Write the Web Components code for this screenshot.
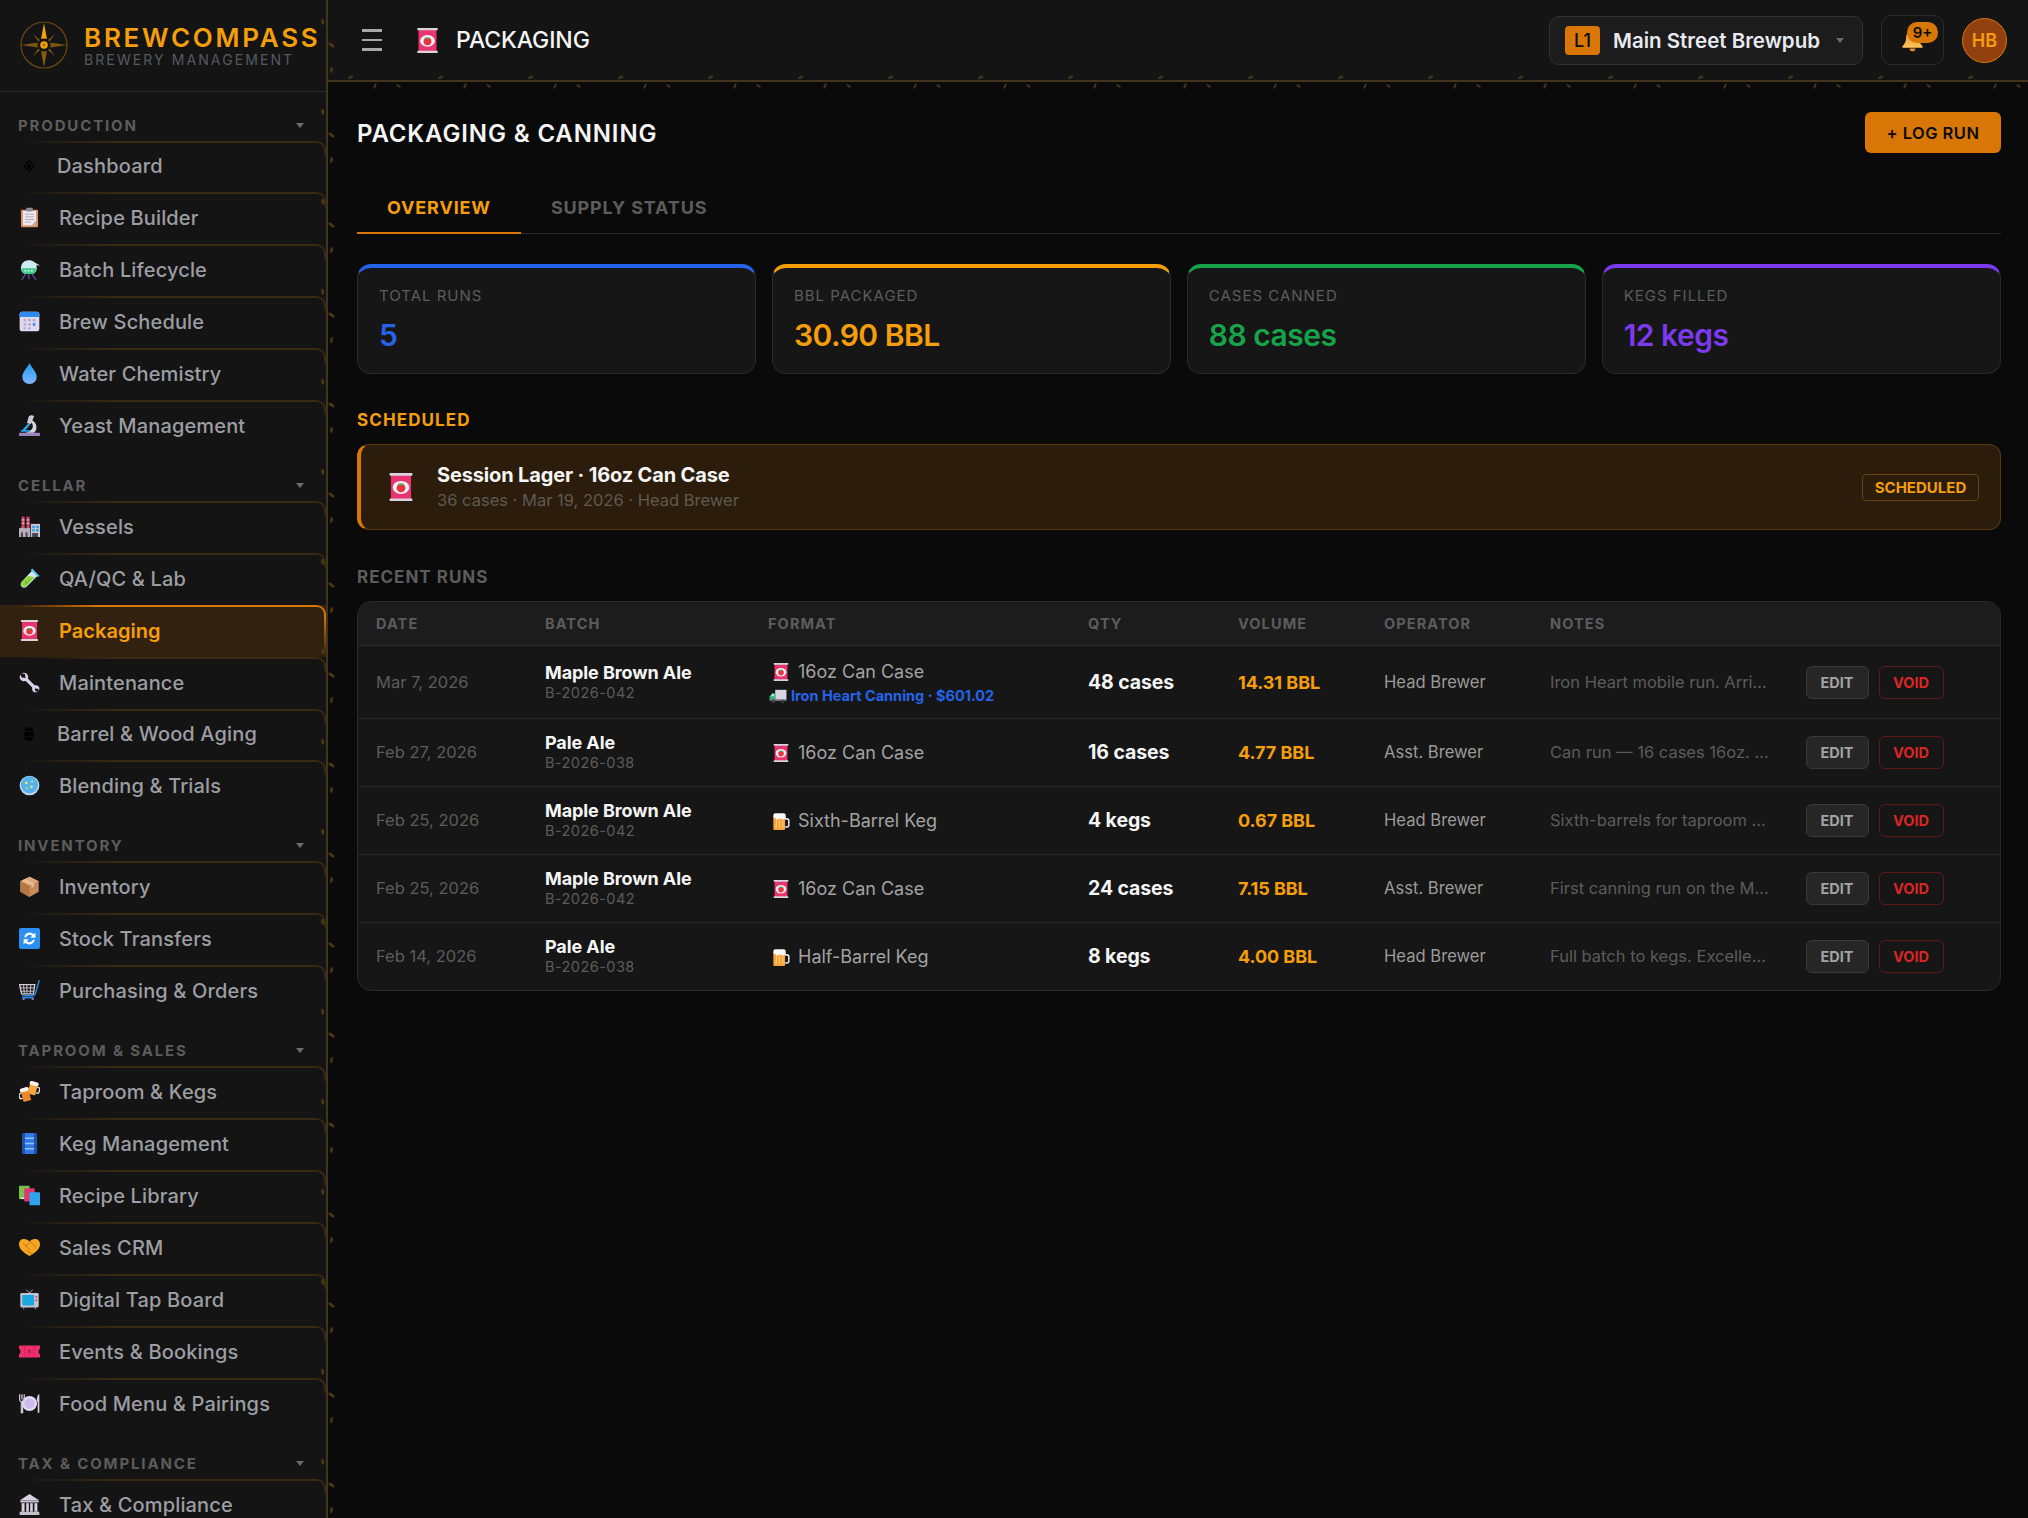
<!DOCTYPE html>
<html lang="en">
<head>
<meta charset="utf-8">
<title>BrewCompass - Packaging</title>
<style>
    html, body { margin: 0; height: 100%; background: #0a0a0a; overflow: hidden; }
    body { font-family: Inter, "Liberation Sans", sans-serif; color: #f5f5f5; }
</style>
</head>
<body>
<brew-app></brew-app>

<script>
// flat emoji style icons, 32x32 viewBox
const ICONS = {
    diamond: '<path d="M16 4 28 16 16 28 4 16Z" fill="none" stroke="#000" stroke-width="2.5"/><path d="M16 10 22 16 16 22 10 16Z" fill="#000"/>',
    clipboard: '<rect x="3" y="4" width="26" height="27" rx="1.5" fill="#d98f62"/><rect x="6" y="6" width="20" height="22" fill="#efe9f4"/><path d="M26 21v7h-7z" fill="#c9a58e"/><rect x="11" y="1" width="10" height="6" rx="1.5" fill="#8d8a96"/><path d="M9 11h14M9 15h14M9 19h14M9 23h9" stroke="#a9a3b5" stroke-width="1.4"/>',
    alembic: '<path d="M15 2C8 2 3 7 3 14c0 4 2 7 6 9h12c4-2 6-5 6-9 0-1.500-.2-3-.8-4.300L32 10 23 4.500C21 2.800 18 2 15 2z" fill="#cfeaf5"/><path d="M3.500 14h23c-.5 4-2.500 7-5.500 9H9c-3-2-5-5-5.500-9z" fill="#3fc98a"/><path d="M8 18h14" stroke="#e6fff2" stroke-width="1.800" stroke-dasharray="3 2"/><path d="M10 23 4 32M20 23l6 9M15 23v8" stroke="#6a4bb0" stroke-width="1.800"/>',
    calendar: '<rect x="1" y="1" width="30" height="30" rx="4" fill="#e3daf2"/><path d="M1 9V5a4 4 0 0 1 4-4h22a4 4 0 0 1 4 4v4z" fill="#2f8bf0"/><g fill="#b4abc8"><rect x="7" y="12" width="4" height="4"/><rect x="14" y="12" width="4" height="4"/><rect x="21" y="12" width="4" height="4"/><rect x="7" y="18.500" width="4" height="4"/><rect x="14" y="18.500" width="4" height="4"/><rect x="7" y="25" width="4" height="3"/><rect x="14" y="25" width="4" height="3"/></g><rect x="21" y="18.500" width="4" height="4" fill="#2f8bf0"/>',
    droplet: '<defs><linearGradient id="dr" x1="0" y1="0" x2="0" y2="1"><stop offset="0" stop-color="#1c9cf0"/><stop offset="1" stop-color="#7fb6ff"/></linearGradient></defs><path d="M16 0C12 8 5 14 5 21a11 11 0 0 0 22 0C27 14 20 8 16 0z" fill="url(#dr)"/>',
    microscope: '<rect x="0" y="27" width="32" height="5" rx="1" fill="#9b83bd"/><path d="M19 8c6 2 9 8 7 15-1 2-2 4-4 4H10c6-2 11-5 11-10 0-3-1-5-4-7z" fill="#d6d2de"/><path d="M15 2c2-2 6-2 8 0l-5 12-6-2z" fill="#cfcbd6"/><path d="M5 23 14 13l3 2L8 25z" fill="#29a9ec"/><rect x="3" y="23" width="14" height="2.500" fill="#29a9ec"/>',
    factory: '<path d="M0 32V19l7-3 3 3 4-3 3 3V32z" fill="#b7adbd"/><rect x="4" y="1" width="4.500" height="17" fill="#d9436a"/><rect x="11.500" y="1" width="4.500" height="17" fill="#d9436a"/><path d="M4 6h4.500M11.500 6H16M4 11h4.500M11.500 11H16" stroke="#e8dbe0" stroke-width="1.500"/><rect x="18" y="12" width="14" height="20" fill="#c9c3d1"/><g fill="#2aa0e8"><rect x="20" y="15" width="4" height="3.500"/><rect x="26" y="15" width="4" height="3.500"/><rect x="20" y="20" width="4" height="3.500"/><rect x="26" y="20" width="4" height="3.500"/></g><g fill="#4b4455"><rect x="3" y="25" width="3" height="7"/><rect x="10" y="25" width="3" height="7"/><rect x="20" y="26" width="9" height="6"/></g>',
    testtube: '<path d="M21 3 29 11 12 28c-2.500 2.500-6 2.500-8 .4-2.200-2.200-2-5.600.4-8z" fill="#cfeaf5"/><path d="M14 12 24 14 12 27c-2.500 2.500-5.600 2.500-7.500.5-2-2-1.800-4.800.5-7z" fill="#8ed43d"/><path d="M19 2 30 13" stroke="#5fc1ee" stroke-width="3"/><circle cx="11" cy="22" r="1.500" fill="#3f9a33"/><circle cx="15" cy="18" r="1" fill="#3f9a33"/>',
    can: '<rect x="4.500" y="2" width="23" height="28" fill="#e9356f"/><rect x="3" y="0" width="26" height="3" rx=".6" fill="#dad3e0"/><rect x="3" y="29" width="26" height="3" rx=".6" fill="#dad3e0"/><ellipse cx="16" cy="16.500" rx="9.500" ry="7.500" fill="#f3edf5"/><circle cx="16" cy="17" r="5" fill="#e8343f"/><path d="M12.800 12h6.400l-1.400 2h-3.600z" fill="#42b84a"/>',
    wrench: '<path d="M9 9 25 25" stroke="#d9d2e6" stroke-width="5"/><circle cx="7.500" cy="7.500" r="6.500" fill="#d9d2e6"/><circle cx="25.500" cy="25.500" r="5.500" fill="#d9d2e6"/><path d="M1 1 9 3 10 9 4 8.500Z" fill="#141414"/><path d="M31 31 25 29.500 24 25 29 25.500Z" fill="#141414"/>',
    barrel: '<path d="M9 1h14c3 4 4 9 4 15s-1 11-4 15H9c-3-4-4-9-4-15S6 5 9 1z" fill="#000"/><path d="M5 10h22M5 22h22" stroke="#1c1c1c" stroke-width="1.500"/>',
    petri: '<circle cx="16" cy="16" r="15" fill="#c4d6ef"/><circle cx="16" cy="15" r="13" fill="#55b2ea"/><circle cx="11" cy="12" r="2" fill="#e6e85c"/><circle cx="20" cy="10" r="1.500" fill="#e6e85c"/><circle cx="19" cy="18" r="2" fill="#e6e85c"/><circle cx="12" cy="20" r="1.200" fill="#e6e85c"/>',
    box: '<path d="M16 1 30 8v16l-14 8-14-8V8z" fill="#c68a5c"/><path d="M16 1 30 8 16 15 2 8z" fill="#e0aa7c"/><path d="M16 15v17L2 24V8z" fill="#b37645"/><path d="M9 4.500 23 11.500v5l-4 2v-5L5 6.500z" fill="#f0c9a3" opacity=".7"/>',
    sync: '<rect x="0" y="0" width="32" height="32" rx="3" fill="#2a8ff0"/><path d="M8 14a8.500 8.500 0 0 1 14.500-4.500L25 7v8h-8l3-3a5.500 5.500 0 0 0-9 2z" fill="#fff"/><path d="M24 18a8.500 8.500 0 0 1-14.500 4.500L7 25v-8h8l-3 3a5.500 5.500 0 0 0 9-2z" fill="#fff"/>',
    cart: '<path d="M1 7h23l-2 14H4z" fill="none" stroke="#d0cdd8" stroke-width="2"/><path d="M1 12h22M2 17h21M7 7l1 14M12 7v14M18 7l-1 14" stroke="#d0cdd8" stroke-width="1.400"/><path d="M31 0 25 21c-.6 2-2 3-4 3H5" fill="none" stroke="#2f8bf0" stroke-width="2"/><circle cx="7" cy="29" r="2" fill="#7c74a8"/><circle cx="21" cy="29" r="2" fill="#7c74a8"/><path d="M5 27h17" stroke="#2f8bf0" stroke-width="2"/>',
    beers: '<g transform="rotate(15 22 12)"><rect x="15" y="5" width="12" height="16" rx="1.500" fill="#f7a63a"/><rect x="14" y="1" width="14" height="6" rx="3" fill="#fbf4ee"/><path d="M27 8h2a2.500 2.500 0 0 1 2.500 2.500v4A2.500 2.500 0 0 1 29 17h-2" fill="none" stroke="#e8e3ee" stroke-width="2"/></g><g transform="rotate(-15 10 20)"><rect x="4" y="14" width="12" height="17" rx="1.500" fill="#f0862a"/><rect x="3" y="10" width="14" height="6" rx="3" fill="#fbf4ee"/><path d="M4 17H2a2 2 0 0 0-2 2v4a2 2 0 0 0 2 2h2" fill="none" stroke="#e8e3ee" stroke-width="2"/></g>',
    keg: '<rect x="5" y="0" width="22" height="32" rx="2" fill="#2f7be6"/><path d="M5 8h22M5 16h22M5 24h22" stroke="#8fc0f8" stroke-width="2"/><rect x="5" y="0" width="4" height="32" fill="#1d4ea8"/><rect x="23" y="0" width="4" height="32" fill="#1d4ea8"/>',
    books: '<rect x="0" y="1" width="16" height="20" rx="1" fill="#79c24a"/><rect x="2" y="19" width="14" height="2.500" fill="#d8e8d0"/><rect x="8" y="5" width="16" height="20" rx="1" fill="#e0356f"/><rect x="16" y="11" width="16" height="20" rx="1" fill="#2fa3ec"/>',
    handshake: '<path d="M16 29C7 24 0 18 0 11c0-5 3-8 8-8 3 0 6 1.500 8 4 2-2.500 5-4 8-4 5 0 8 3 8 8 0 7-7 13-16 18z" fill="#f6a623"/><path d="M6 9 16 19M12 20l6 5M10 14l8-7 8 10M16 23l4 3" stroke="#d07f12" stroke-width="1.500" fill="none"/>',
    tv: '<path d="M11 1 16 6 21 1" fill="none" stroke="#b8b2c4" stroke-width="1.500"/><rect x="2" y="6" width="28" height="22" rx="2" fill="#c9c3d1"/><rect x="5" y="9" width="18" height="16" rx="1" fill="#18a8e0"/><circle cx="26.500" cy="12" r="1.500" fill="#e0356f"/><circle cx="26.500" cy="17" r="1.500" fill="#e0356f"/><path d="M7 28v3M25 28v3" stroke="#8d8798" stroke-width="2"/>',
    ticket: '<path d="M0 7h32v5c-1.500 0-2 1.500-2 4s.5 4 2 4v5H0v-5c1.500 0 2-1.500 2-4s-.5-4-2-4z" fill="#ee2f6b"/><path d="M9 9v14M23 9v14" stroke="#b81f50" stroke-width="1.500" stroke-dasharray="2 2"/><rect x="14" y="13" width="4" height="6" fill="#b81f50"/>',
    plate: '<circle cx="16" cy="16" r="11.500" fill="#e6dcf5"/><circle cx="16" cy="16" r="8" fill="#cdbdea"/><path d="M1 2v8c0 2 1 3 2.500 3v17h2V13C7 13 8 12 8 10V2M4.500 2v8" stroke="#d9d0e6" stroke-width="1.800" fill="none"/><path d="M30 2c-2 2-3 6-3 11h1.500v17H31V2z" fill="#d9d0e6"/>',
    bank: '<path d="M16 0 31 10H1z" fill="#d6d2de"/><rect x="2" y="10" width="28" height="3" fill="#c4c0cc"/><g fill="#d6d2de"><rect x="4" y="14" width="4.500" height="13"/><rect x="11" y="14" width="4" height="13"/><rect x="17" y="14" width="4" height="13"/><rect x="23.500" y="14" width="4.500" height="13"/></g><rect x="1" y="27" width="30" height="5" fill="#c4c0cc"/>',
    bell: '<defs><linearGradient id="bl" x1="0" y1="0" x2="0" y2="1"><stop offset="0" stop-color="#e88a2a"/><stop offset="1" stop-color="#fbc65a"/></linearGradient></defs><path d="M16 2c-6 0-9 5-9 11 0 5-2 8-5 11v2h28v-2c-3-3-5-6-5-11 0-6-3-11-9-11z" fill="url(#bl)"/><path d="M12 27a4 4 0 0 0 8 0z" fill="#f0862a"/>',
    beer: '<g transform="translate(-2 -1) scale(1.1)"><rect x="4" y="7" width="19" height="23" rx="2" fill="#f7a63a"/><path d="M23 12h3a3 3 0 0 1 3 3v7a3 3 0 0 1-3 3h-3" fill="none" stroke="#e8e3ee" stroke-width="2.500"/><path d="M4 9V6a3 3 0 0 1 3-3h14a3 3 0 0 1 3 3v5c0 1.500-2 1.500-2 0 0 3-4 3-4 0-1 2-4 2-5 0-1 3-5 3-6-1-.5 1-3 1-3-2z" fill="#fbf7f2"/><path d="M9 15v11M14 15v11M19 15v11" stroke="#fcd48a" stroke-width="1.500"/></g>',
    truck: '<rect x="11" y="5" width="20" height="18" fill="#d9d5e0"/><path d="M11 11H5l-4 6v6h10z" fill="#35b27a"/><path d="M6 12.500h3v4H3.500z" fill="#bfeaf7"/><rect x="1" y="22" width="30" height="3" fill="#6f6a78"/><circle cx="8" cy="26" r="3" fill="#3a3640"/><circle cx="24" cy="26" r="3" fill="#3a3640"/>'
};

class EmojiIcon extends HTMLElement {
    connectedCallback() {
        const size = this.getAttribute('size') || 21;
        const name = this.getAttribute('name');
        this.attachShadow({ mode: 'open' });
        this.shadowRoot.innerHTML = `
            <style>:host { display: inline-flex; flex: none; width: ${size}px; height: ${size}px; } svg { display: block; width: 100%; height: 100%; }</style>
            <svg viewBox="0 0 32 32">${ICONS[name] || ''}</svg>`;
    }
}

const navItemTemplate = document.createElement('template');
navItemTemplate.innerHTML = `
<style>
    :host { display: flex; align-items: center; position: relative; height: 52px; box-sizing: border-box;
        padding: 0 0 1px 19px; font-size: 20px; font-weight: 500; color: #9c9ea3; letter-spacing: .15px; }
    :host([short]) { height: 51px; padding-left: 22px; }
    :host::before { content: ''; position: absolute; inset: 0; box-sizing: border-box; pointer-events: none;
        border-top: 2px solid #3a2a14; border-right: 2px solid #3a2a14; border-top-right-radius: 9px;
        -webkit-mask-image: linear-gradient(to right, transparent 5%, #000 35%), linear-gradient(to bottom, #000 0, #000 20%, transparent 35%);
        -webkit-mask-composite: source-in; mask-composite: intersect; }
    :host([active]) { background: #33210f; color: #f59e0b; font-weight: 600; letter-spacing: .05px; }
    :host([active])::before { border-color: #d97706;
        -webkit-mask-image: linear-gradient(to right, transparent 5%, #000 30%), linear-gradient(to bottom, #000 0, #000 20%, transparent 100%); }
    .label { margin-left: 19px; white-space: nowrap; }
    :host([short]) .label { margin-left: 21px; }
</style>
<slot name="icon"></slot>
<span class="label"><slot></slot></span>
`;

class NavItem extends HTMLElement {
    constructor() {
        super();
        this.attachShadow({ mode: 'open' });
        this.shadowRoot.appendChild(navItemTemplate.content.cloneNode(true));
    }
}

const navSectionTemplate = document.createElement('template');
navSectionTemplate.innerHTML = `
<style>
    :host { display: block; }
    .head { display: flex; align-items: flex-end; justify-content: space-between; height: 49px; box-sizing: border-box;
        padding: 0 22px 6px 18px; font-size: 15px; font-weight: 700; letter-spacing: 1.85px; color: #5c5c5c; }
    .caret { width: 0; height: 0; margin-bottom: 7px; border: 4px solid transparent; border-top: 5px solid #6b6b6b; border-bottom: 0; }
</style>
<div class="head"><span class="label"></span><span class="caret"></span></div>
<slot></slot>
`;

class NavSection extends HTMLElement {
    constructor() {
        super();
        this.attachShadow({ mode: 'open' });
        this.shadowRoot.appendChild(navSectionTemplate.content.cloneNode(true));
        this.shadowRoot.querySelector('.label').textContent = this.getAttribute('label');
    }
}

const sidebarTemplate = document.createElement('template');
sidebarTemplate.innerHTML = `
<style>
    :host { display: block; flex: none; width: 328px; height: 100%; box-sizing: border-box; overflow: hidden;
        background: #141414; border-right: 2px solid #42351d; }
    .brand { display: flex; align-items: center; gap: 16px; height: 92px; box-sizing: border-box; padding: 0 0 0 20px;
        border-bottom: 1px solid #2a2a2a; }
    .compass { flex: none; width: 48px; height: 48px; margin-bottom: 2px; }
    .name { font-size: 26px; line-height: 30px; font-weight: 600; letter-spacing: 2.75px; color: #f59e0b; white-space: nowrap; }
    .tag { margin-top: -1px; font-size: 14px; line-height: 16px; letter-spacing: 2.1px; color: #565a60; white-space: nowrap; }
</style>
<div class="brand">
    <svg class="compass" viewBox="0 0 48 48">
        <circle cx="24" cy="24" r="23" fill="none" stroke="#6f4a10" stroke-width="1.200"/>
        <path d="M1 24 18 21.500 24 24 18 26.500ZM47 24 30 21.500 24 24 30 26.500Z" fill="#7d5410"/>
        <path d="M24 2 26.800 17 24 24 21.200 17Z" fill="#f59e0b"/>
        <path d="M24 46 26.800 31 24 24 21.200 31Z" fill="#8a5c10"/>
        <path d="M13 13 21 20 24 24 19 21ZM35 13 27 20 24 24 29 21ZM13 35 21 28 24 24 19 27ZM35 35 27 28 24 24 29 27Z" fill="#8a5c10"/>
        <circle cx="24" cy="24" r="6.500" fill="#141414"/>
        <circle cx="24" cy="24" r="3.800" fill="#f59e0b"/>
        <circle cx="24" cy="24" r="1.400" fill="#a86a08"/>
    </svg>
    <div>
        <div class="name">BREWCOMPASS</div>
        <div class="tag">BREWERY MANAGEMENT</div>
    </div>
</div>
<slot></slot>
`;

class BrewSidebar extends HTMLElement {
    constructor() {
        super();
        this.attachShadow({ mode: 'open' });
        this.shadowRoot.appendChild(sidebarTemplate.content.cloneNode(true));
    }
}

const topBarTemplate = document.createElement('template');
topBarTemplate.innerHTML = `
<style>
    :host { display: flex; align-items: center; flex: none; height: 82px; box-sizing: border-box; padding: 0 21px 0 34px;
        background: #141414; border-bottom: 2px solid #42351d; }
    .burger { display: flex; flex-direction: column; gap: 7px; width: 20px; padding: 0; border: 0; background: none; }
    .burger span { display: block; height: 2.400px; background: #a8a8a8; }
    .title { margin-left: 16px; font-size: 23px; font-weight: 500; color: #f5f5f5; letter-spacing: -.1px; }
    .can { margin-left: 33px; }
    .spacer { flex: 1; }
    .location { display: flex; align-items: center; width: 314px; height: 49px; box-sizing: border-box; padding: 0 15px;
        background: #1c1c1c; border: 1px solid #333; border-radius: 10px; }
    .code { display: flex; align-items: center; justify-content: center; width: 35px; height: 29px; border-radius: 4px;
        background: #d97706; color: #0a0a0a; font-size: 18px; font-weight: 500; }
    .place { margin-left: 13px; font-size: 20.500px; font-weight: 600; color: #e8eaf0; white-space: nowrap; }
    .caret { width: 0; height: 0; margin-left: auto; margin-right: 3px; border: 4px solid transparent; border-top: 5px solid #6b6b6b; border-bottom: 0; }
    .bell { position: relative; display: flex; align-items: center; justify-content: center; width: 63px; height: 50px;
        box-sizing: border-box; margin-left: 18px; padding: 0 0 0 0; border: 1px solid #2a2a2a; border-radius: 10px; }
    .badge { position: absolute; top: 6px; left: 25px; min-width: 31px; height: 21px; border-radius: 10px; background: #d97706;
        color: #0a0a0a; font-size: 15px; font-weight: 600; line-height: 21px; text-align: center; }
    .avatar { display: flex; align-items: center; justify-content: center; width: 45px; height: 45px; box-sizing: border-box;
        margin-left: 18px; border-radius: 50%; background: #92400e; border: 1.500px solid #d97706; color: #f59e0b; font-size: 18px; font-weight: 600; }
</style>
<div class="burger"><span></span><span></span><span></span></div>
<emoji-icon class="can" name="can" size="25"></emoji-icon>
<div class="title"><slot></slot></div>
<div class="spacer"></div>
<div class="location">
    <div class="code">L1</div>
    <div class="place">Main Street Brewpub</div>
    <div class="caret"></div>
</div>
<div class="bell"><emoji-icon name="bell" size="23"></emoji-icon><div class="badge">9+</div></div>
<div class="avatar">HB</div>
`;

class TopBar extends HTMLElement {
    constructor() {
        super();
        this.attachShadow({ mode: 'open' });
        this.shadowRoot.appendChild(topBarTemplate.content.cloneNode(true));
    }
}

const pageHeadTemplate = document.createElement('template');
pageHeadTemplate.innerHTML = `
<style>
    :host { display: flex; align-items: center; justify-content: space-between; height: 41px; margin-bottom: 30px; }
    h1 { margin: 2px 0 0; font-size: 24px; font-weight: 600; letter-spacing: .87px; color: #f5f5f5; }
    button { width: 136px; height: 41px; border: 0; border-radius: 6px; background: #d97706; color: #0a0a0a;
        font: 600 16.500px Inter, sans-serif; letter-spacing: .45px; }
</style>
<h1><slot></slot></h1>
<button>+ LOG RUN</button>
`;

class PageHead extends HTMLElement {
    constructor() {
        super();
        this.attachShadow({ mode: 'open' });
        this.shadowRoot.appendChild(pageHeadTemplate.content.cloneNode(true));
    }
}

const tabBarTemplate = document.createElement('template');
tabBarTemplate.innerHTML = `
<style>
    :host { display: flex; height: 51px; box-sizing: border-box; border-bottom: 1px solid #2a2a2a; margin-bottom: 30px; }
    .tab { display: flex; align-items: center; height: 51px; box-sizing: border-box; padding: 0 30px 2px;
        font-size: 18px; font-weight: 700; letter-spacing: .85px; color: #5c5c5c; }
    .tab.on { padding-bottom: 0; color: #f59e0b; border-bottom: 2px solid #d97706; }
</style>
<div class="tab on">OVERVIEW</div>
<div class="tab">SUPPLY STATUS</div>
`;

class TabBar extends HTMLElement {
    constructor() {
        super();
        this.attachShadow({ mode: 'open' });
        this.shadowRoot.appendChild(tabBarTemplate.content.cloneNode(true));
    }
}

const statCardTemplate = document.createElement('template');
statCardTemplate.innerHTML = `
<style>
    :host { display: block; height: 110px; box-sizing: border-box; padding: 18px 21px 0;
        background: #161616; border: 1px solid #2a2a2a; border-top: 4px solid var(--accent); border-radius: 14px; }
    .label { font-size: 15px; line-height: 20px; letter-spacing: 1px; color: #5c5c5c; }
    .value { margin-top: 10px; font-size: 30px; line-height: 38px; font-weight: 600; letter-spacing: -.5px; color: var(--accent); }
</style>
<div class="label"></div>
<div class="value"></div>
`;

class StatCard extends HTMLElement {
    constructor() {
        super();
        this.attachShadow({ mode: 'open' });
        this.shadowRoot.appendChild(statCardTemplate.content.cloneNode(true));
        this.shadowRoot.querySelector('.label').textContent = this.getAttribute('label');
        this.shadowRoot.querySelector('.value').textContent = this.getAttribute('value');
        this.style.setProperty('--accent', this.getAttribute('accent'));
    }
}

const scheduledTemplate = document.createElement('template');
scheduledTemplate.innerHTML = `
<style>
    :host { display: flex; align-items: center; height: 86px; box-sizing: border-box; padding: 0 21px 0 26px;
        background: #2c1c0b; border: 1px solid #5c3a10; border-left: 4px solid #d97706; border-radius: 12px; }
    .text { flex: 1; margin: 2px 0 0 22px; }
    .title { font-size: 20px; line-height: 25px; font-weight: 700; letter-spacing: -.15px; color: #f5f5f5; }
    .sub { font-size: 16.500px; line-height: 25px; color: #5f5a52; }
    .badge { display: flex; align-items: center; justify-content: center; width: 117px; height: 27px; box-sizing: border-box;
        border: 1px solid #6b4310; border-radius: 4px; font-size: 15px; font-weight: 700; color: #f59e0b; }
</style>
<emoji-icon name="can" size="28"></emoji-icon>
<div class="text">
    <div class="title">Session Lager · 16oz Can Case</div>
    <div class="sub">36 cases · Mar 19, 2026 · Head Brewer</div>
</div>
<div class="badge">SCHEDULED</div>
`;

class ScheduledCard extends HTMLElement {
    constructor() {
        super();
        this.attachShadow({ mode: 'open' });
        this.shadowRoot.appendChild(scheduledTemplate.content.cloneNode(true));
    }
}

// column starts taken from the table: date, batch, format, qty, volume, operator, notes, actions
const COLUMNS = '169px 223px 320px 150px 146px 166px 255.500px 1fr';

const runsTableTemplate = document.createElement('template');
runsTableTemplate.innerHTML = `
<style>
    :host { display: block; box-sizing: border-box; background: #161616; border: 1px solid #2a2a2a; border-radius: 14px; overflow: hidden; }
    .head { display: grid; grid-template-columns: ${COLUMNS}; align-items: center; height: 44px; box-sizing: border-box; padding-left: 18px;
        background: #1c1c1c; border-bottom: 1px solid #2a2a2a; font-size: 14.500px; font-weight: 700; letter-spacing: 1.1px; color: #5c5c5c; }
</style>
<div class="head"><span>DATE</span><span>BATCH</span><span>FORMAT</span><span>QTY</span><span>VOLUME</span><span>OPERATOR</span><span>NOTES</span><span></span></div>
<slot></slot>
`;

class RunsTable extends HTMLElement {
    constructor() {
        super();
        this.attachShadow({ mode: 'open' });
        this.shadowRoot.appendChild(runsTableTemplate.content.cloneNode(true));
    }
}

const runRowTemplate = document.createElement('template');
runRowTemplate.innerHTML = `
<style>
    :host { display: grid; grid-template-columns: ${COLUMNS}; align-items: center; box-sizing: border-box; padding: 14px 0 13px 18px;
        border-bottom: 1px solid #2a2a2a; }
    :host([vendor]) { padding-bottom: 12px; }
    :host(:last-child) { border-bottom: 0; }
    .date, .qty, .volume, .operator, .notes, .actions { margin-bottom: 2px; }
    .date { font-size: 16.500px; color: #5c5c5c; }
    .batch { font-size: 18px; line-height: 20px; font-weight: 700; letter-spacing: -.08px; color: #f5f5f5; }
    .code { font-size: 14.500px; line-height: 20px; letter-spacing: .45px; color: #5c5c5c; }
    .format { display: flex; align-items: center; font-size: 18px; line-height: 20px; color: #a3a3a3; }
    .format emoji-icon { margin: 0 8px 0 4px; }
    .has-vendor { padding-top: 2px; }
    .vendor { display: none; align-items: center; margin-top: 4px; font-size: 14.500px; line-height: 20px; font-weight: 700; color: #2563eb; }
    .vendor emoji-icon { margin-right: 4px; margin-left: 1px; }
    .qty { font-size: 19.500px; font-weight: 700; letter-spacing: -.1px; color: #f5f5f5; }
    .volume { font-size: 18px; font-weight: 700; letter-spacing: -.05px; color: #f59e0b; }
    .operator { font-size: 16.600px; color: #9a9a9a; }
    .notes { font-size: 16.500px; color: #5c5c5c; white-space: nowrap; }
    .actions { display: flex; gap: 10px; }
    button { height: 33px; box-sizing: border-box; border-radius: 6px; padding: 0; font: 700 14.500px Inter, sans-serif; }
    .edit { width: 63px; background: #262626; border: 1px solid #3a3a3a; color: #a3a3a3; }
    .void { width: 65px; background: transparent; border: 1px solid #5c1a1a; color: #dc2626; }
</style>
<div class="date"></div>
<div><div class="batch"></div><div class="code"></div></div>
<div class="fmt-cell">
    <div class="format"><emoji-icon size="18"></emoji-icon><span class="fmt"></span></div>
    <div class="vendor"><emoji-icon name="truck" size="18"></emoji-icon><span class="vtext"></span></div>
</div>
<div class="qty"></div>
<div class="volume"></div>
<div class="operator"></div>
<div class="notes"></div>
<div class="actions"><button class="edit">EDIT</button><button class="void">VOID</button></div>
`;

class RunRow extends HTMLElement {
    constructor() {
        super();
        this.attachShadow({ mode: 'open' });
        const row = runRowTemplate.content.cloneNode(true);
        for (const key of ['date', 'batch', 'code', 'qty', 'volume', 'operator', 'notes']) {
            row.querySelector('.' + key).textContent = this.getAttribute(key);
        }
        row.querySelector('.fmt').textContent = this.getAttribute('format');
        // the icon reads its name when it connects, so set it before appending
        row.querySelector('.format emoji-icon').setAttribute('name', this.getAttribute('icon'));
        if (this.hasAttribute('vendor')) {
            row.querySelector('.fmt-cell').classList.add('has-vendor');
            row.querySelector('.vendor').style.display = 'flex';
            row.querySelector('.vtext').textContent = this.getAttribute('vendor');
        }
        this.shadowRoot.appendChild(row);
    }
}

// small hop leaves that repeat along the two dim amber borders
class HopVine extends HTMLElement {
    connectedCallback() {
        this.attachShadow({ mode: 'open' });
        this.shadowRoot.innerHTML = `
        <style>
            :host { position: absolute; inset: 0; pointer-events: none; display: block; }
            svg { position: absolute; left: 0; top: 0; }
        </style>
        <svg width="2028" height="1518">
            <defs>
                <pattern id="side" patternUnits="userSpaceOnUse" x="318" y="0" width="20" height="90">
                    <g fill="#4a3617">
                        <ellipse cx="4.700" cy="21.700" rx="1.500" ry="3" transform="rotate(-8 4.700 21.700)"/>
                        <ellipse cx="13.500" cy="45" rx="1.400" ry="3.500" transform="rotate(-55 13.500 45)"/>
                        <ellipse cx="13.500" cy="70" rx="1.400" ry="3" transform="rotate(12 13.500 70)"/>
                    </g>
                </pattern>
                <pattern id="top" patternUnits="userSpaceOnUse" x="340" y="72" width="90" height="20">
                    <g fill="#42321a">
                        <ellipse cx="10.700" cy="5.300" rx="2.800" ry="1.400" transform="rotate(-20 10.700 5.300)"/>
                        <ellipse cx="35" cy="14" rx="1.100" ry="3" transform="rotate(22 35 14)"/>
                        <ellipse cx="58.500" cy="14" rx="2.400" ry="1.200" transform="rotate(28 58.500 14)"/>
                    </g>
                </pattern>
            </defs>
            <rect x="318" y="0" width="20" height="1518" fill="url(#side)"/>
            <rect x="340" y="72" width="1688" height="20" fill="url(#top)"/>
        </svg>`;
    }
}

const brewAppTemplate = document.createElement('template');
brewAppTemplate.innerHTML = `
<style>
    :host { display: flex; position: relative; height: 1518px; overflow: hidden; background: #0a0a0a; }
    .main { flex: 1; display: flex; flex-direction: column; min-width: 0; }
    .page { padding: 30px 27px 0 29px; }
    .stats { display: grid; grid-template-columns: repeat(4, 1fr); gap: 15.500px; margin-bottom: 35px; }
    h2 { margin: 0; font-size: 17px; line-height: 22px; font-weight: 700; }
    .amber { color: #f59e0b; margin-bottom: 13px; letter-spacing: 1.1px; }
    .grey { color: #5c5c5c; margin: 36px 0 13px; letter-spacing: 1px; }
</style>
<brew-sidebar>
    <nav-section label="PRODUCTION">
        <nav-item short><emoji-icon slot="icon" name="diamond" size="14"></emoji-icon>Dashboard</nav-item>
        <nav-item><emoji-icon slot="icon" name="clipboard"></emoji-icon>Recipe Builder</nav-item>
        <nav-item><emoji-icon slot="icon" name="alembic"></emoji-icon>Batch Lifecycle</nav-item>
        <nav-item><emoji-icon slot="icon" name="calendar"></emoji-icon>Brew Schedule</nav-item>
        <nav-item><emoji-icon slot="icon" name="droplet"></emoji-icon>Water Chemistry</nav-item>
        <nav-item><emoji-icon slot="icon" name="microscope"></emoji-icon>Yeast Management</nav-item>
    </nav-section>
    <nav-section label="CELLAR">
        <nav-item><emoji-icon slot="icon" name="factory"></emoji-icon>Vessels</nav-item>
        <nav-item><emoji-icon slot="icon" name="testtube"></emoji-icon>QA/QC &amp; Lab</nav-item>
        <nav-item active><emoji-icon slot="icon" name="can"></emoji-icon>Packaging</nav-item>
        <nav-item><emoji-icon slot="icon" name="wrench"></emoji-icon>Maintenance</nav-item>
        <nav-item short><emoji-icon slot="icon" name="barrel" size="14"></emoji-icon>Barrel &amp; Wood Aging</nav-item>
        <nav-item><emoji-icon slot="icon" name="petri"></emoji-icon>Blending &amp; Trials</nav-item>
    </nav-section>
    <nav-section label="INVENTORY">
        <nav-item><emoji-icon slot="icon" name="box"></emoji-icon>Inventory</nav-item>
        <nav-item><emoji-icon slot="icon" name="sync"></emoji-icon>Stock Transfers</nav-item>
        <nav-item><emoji-icon slot="icon" name="cart"></emoji-icon>Purchasing &amp; Orders</nav-item>
    </nav-section>
    <nav-section label="TAPROOM &amp; SALES">
        <nav-item><emoji-icon slot="icon" name="beers"></emoji-icon>Taproom &amp; Kegs</nav-item>
        <nav-item><emoji-icon slot="icon" name="keg"></emoji-icon>Keg Management</nav-item>
        <nav-item><emoji-icon slot="icon" name="books"></emoji-icon>Recipe Library</nav-item>
        <nav-item><emoji-icon slot="icon" name="handshake"></emoji-icon>Sales CRM</nav-item>
        <nav-item><emoji-icon slot="icon" name="tv"></emoji-icon>Digital Tap Board</nav-item>
        <nav-item><emoji-icon slot="icon" name="ticket"></emoji-icon>Events &amp; Bookings</nav-item>
        <nav-item><emoji-icon slot="icon" name="plate"></emoji-icon>Food Menu &amp; Pairings</nav-item>
    </nav-section>
    <nav-section label="TAX &amp; COMPLIANCE">
        <nav-item><emoji-icon slot="icon" name="bank"></emoji-icon>Tax &amp; Compliance</nav-item>
    </nav-section>
</brew-sidebar>
<div class="main">
    <top-bar>PACKAGING</top-bar>
    <div class="page">
        <page-head>PACKAGING &amp; CANNING</page-head>
        <tab-bar></tab-bar>
        <div class="stats">
            <stat-card label="TOTAL RUNS" value="5" accent="#2563eb"></stat-card>
            <stat-card label="BBL PACKAGED" value="30.90 BBL" accent="#f59e0b"></stat-card>
            <stat-card label="CASES CANNED" value="88 cases" accent="#16a34a"></stat-card>
            <stat-card label="KEGS FILLED" value="12 kegs" accent="#7c3aed"></stat-card>
        </div>
        <h2 class="amber">SCHEDULED</h2>
        <scheduled-card></scheduled-card>
        <h2 class="grey">RECENT RUNS</h2>
        <runs-table>
            <run-row date="Mar 7, 2026" batch="Maple Brown Ale" code="B-2026-042" icon="can" format="16oz Can Case" vendor="Iron Heart Canning · $601.02" qty="48 cases" volume="14.31 BBL" operator="Head Brewer" notes="Iron Heart mobile run. Arri…"></run-row>
            <run-row date="Feb 27, 2026" batch="Pale Ale" code="B-2026-038" icon="can" format="16oz Can Case" qty="16 cases" volume="4.77 BBL" operator="Asst. Brewer" notes="Can run — 16 cases 16oz. …"></run-row>
            <run-row date="Feb 25, 2026" batch="Maple Brown Ale" code="B-2026-042" icon="beer" format="Sixth-Barrel Keg" qty="4 kegs" volume="0.67 BBL" operator="Head Brewer" notes="Sixth-barrels for taproom …"></run-row>
            <run-row date="Feb 25, 2026" batch="Maple Brown Ale" code="B-2026-042" icon="can" format="16oz Can Case" qty="24 cases" volume="7.15 BBL" operator="Asst. Brewer" notes="First canning run on the M…"></run-row>
            <run-row date="Feb 14, 2026" batch="Pale Ale" code="B-2026-038" icon="beer" format="Half-Barrel Keg" qty="8 kegs" volume="4.00 BBL" operator="Head Brewer" notes="Full batch to kegs. Excelle…"></run-row>
        </runs-table>
    </div>
</div>
<hop-vine></hop-vine>
`;

class BrewApp extends HTMLElement {
    constructor() {
        super();
        this.attachShadow({ mode: 'open' });
        this.shadowRoot.appendChild(brewAppTemplate.content.cloneNode(true));
    }
}

customElements.define('emoji-icon', EmojiIcon);
customElements.define('nav-item', NavItem);
customElements.define('nav-section', NavSection);
customElements.define('brew-sidebar', BrewSidebar);
customElements.define('top-bar', TopBar);
customElements.define('page-head', PageHead);
customElements.define('tab-bar', TabBar);
customElements.define('stat-card', StatCard);
customElements.define('scheduled-card', ScheduledCard);
customElements.define('runs-table', RunsTable);
customElements.define('run-row', RunRow);
customElements.define('hop-vine', HopVine);
customElements.define('brew-app', BrewApp);
</script>
</body>
</html>
